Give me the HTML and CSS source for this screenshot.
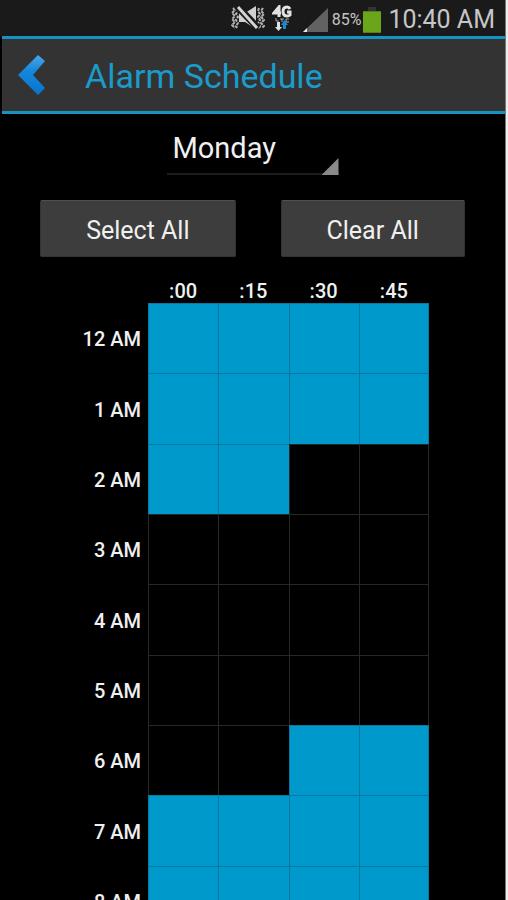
FILE: index.html
```html
<!DOCTYPE html>
<html lang="en">
<head>
<meta charset="utf-8">
<meta name="viewport" content="width=device-width, initial-scale=1">
<title>Alarm Schedule</title>
<link rel="stylesheet" href="styles.css">
</head>
<body>
<div class="app">
  <div class="status">
    <svg class="icon-mute" width="34" height="26" viewBox="0 0 34 26" aria-hidden="true">
      <g fill="none" stroke="#b4b4b4" stroke-width="2">
        <path d="M2 3l2 2-3 3 3 3-3 3 3 3-3 3 3 3" stroke-dasharray="3 1"/>
        <path d="M6 4l1 2-2 3 2 3-2 3 2 3-2 3 1 2" stroke-dasharray="3 1"/>
        <path d="M28 3l-1 3 2 3-2 3 2 3-2 3 2 3-1 3" stroke-dasharray="3 1"/>
        <path d="M32 3l-2 3 3 3-3 3 3 3-3 3 3 3-2 2" stroke-dasharray="3 1"/>
      </g>
      <path d="M8 8h6l11-7v23l-11-7H8z" fill="#d0d0d0"/>
      <path d="M6 1l21 22" stroke="#1b1a1b" stroke-width="7"/>
      <path d="M7 2l19 21" stroke="#d4d4d4" stroke-width="3"/>
    </svg>
    <svg class="icon-data" width="20" height="26" viewBox="0 0 20 26" aria-hidden="true">
      <g fill="none" stroke="#e2e2e2" stroke-width="2">
        <path d="M7 12V2L2 8h7M18 4q-1-2-3-2-4 0-4 4.500t4 4.500q2 0 3-1V7h-3" stroke-width="3"/>
        <path d="M4 13v3h3M8 14h4M10 14v3M17 14h-3v3h3" stroke="#a8a8a8" stroke-width="1"/>
      </g>
      <path d="M5 17h3v5h2l-3.500 4L3 22h2z" fill="#e2e2e2"/>
      <path d="M11 24v-4H9l3.500-5 3.500 5h-2v4z" fill="#168bd0"/>
    </svg>
    <svg class="icon-signal" width="25" height="24" viewBox="0 0 25 24" aria-hidden="true">
      <path d="M25 0v24H0z" fill="#626262"/>
      <path d="M4 20v4H0z" fill="#e8e8e8"/>
    </svg>
    <span class="percent">85%</span>
    <svg class="icon-battery" width="18" height="26" viewBox="0 0 18 26" aria-hidden="true">
      <path d="M5 0h8v4H5z" fill="#343434"/>
      <path d="M0 4h18v22H0z" fill="#6aa51b"/>
      <path d="M0 4h18v1H0zM0 25h18v1H0z" fill="#528415"/>
    </svg>
    <time class="clock">10:40 AM</time>
  </div>
  <header class="bar">
    <button class="back" type="button" aria-label="Back">
      <svg width="28" height="42" viewBox="0 0 28 42" aria-hidden="true">
        <defs>
          <linearGradient id="chevron" x1="0" y1="0" x2="0" y2="1">
            <stop offset="0" stop-color="#4aa6e6"/>
            <stop offset=".4" stop-color="#1487dc"/>
            <stop offset="1" stop-color="#0874cb"/>
          </linearGradient>
        </defs>
        <path d="M20 1l7 6-12 14 12 13-7 7L0 21z" fill="url(#chevron)"/>
      </svg>
    </button>
    <h1 class="title">Alarm Schedule</h1>
  </header>
  <main class="content">
    <div class="day">
      <select class="day-select" aria-label="Day">
        <option>Sunday</option>
        <option selected>Monday</option>
        <option>Tuesday</option>
        <option>Wednesday</option>
        <option>Thursday</option>
        <option>Friday</option>
        <option>Saturday</option>
      </select>
    </div>
    <div class="actions">
      <button class="action" type="button">Select All</button>
      <button class="action" type="button">Clear All</button>
    </div>
    <table class="schedule">
      <colgroup><col class="hours"><col span="4"></colgroup>
      <thead>
        <tr><td></td><th scope="col">:00</th><th scope="col">:15</th><th scope="col">:30</th><th scope="col">:45</th></tr>
      </thead>
      <tbody>
        <tr><th scope="row">12 AM</th><td><input type="checkbox" aria-label="12:00 AM" checked></td><td><input type="checkbox" aria-label="12:15 AM" checked></td><td><input type="checkbox" aria-label="12:30 AM" checked></td><td><input type="checkbox" aria-label="12:45 AM" checked></td></tr>
        <tr><th scope="row">1 AM</th><td><input type="checkbox" aria-label="1:00 AM" checked></td><td><input type="checkbox" aria-label="1:15 AM" checked></td><td><input type="checkbox" aria-label="1:30 AM" checked></td><td><input type="checkbox" aria-label="1:45 AM" checked></td></tr>
        <tr><th scope="row">2 AM</th><td><input type="checkbox" aria-label="2:00 AM" checked></td><td><input type="checkbox" aria-label="2:15 AM" checked></td><td><input type="checkbox" aria-label="2:30 AM"></td><td><input type="checkbox" aria-label="2:45 AM"></td></tr>
        <tr><th scope="row">3 AM</th><td><input type="checkbox" aria-label="3:00 AM"></td><td><input type="checkbox" aria-label="3:15 AM"></td><td><input type="checkbox" aria-label="3:30 AM"></td><td><input type="checkbox" aria-label="3:45 AM"></td></tr>
        <tr><th scope="row">4 AM</th><td><input type="checkbox" aria-label="4:00 AM"></td><td><input type="checkbox" aria-label="4:15 AM"></td><td><input type="checkbox" aria-label="4:30 AM"></td><td><input type="checkbox" aria-label="4:45 AM"></td></tr>
        <tr><th scope="row">5 AM</th><td><input type="checkbox" aria-label="5:00 AM"></td><td><input type="checkbox" aria-label="5:15 AM"></td><td><input type="checkbox" aria-label="5:30 AM"></td><td><input type="checkbox" aria-label="5:45 AM"></td></tr>
        <tr><th scope="row">6 AM</th><td><input type="checkbox" aria-label="6:00 AM"></td><td><input type="checkbox" aria-label="6:15 AM"></td><td><input type="checkbox" aria-label="6:30 AM" checked></td><td><input type="checkbox" aria-label="6:45 AM" checked></td></tr>
        <tr><th scope="row">7 AM</th><td><input type="checkbox" aria-label="7:00 AM" checked></td><td><input type="checkbox" aria-label="7:15 AM" checked></td><td><input type="checkbox" aria-label="7:30 AM" checked></td><td><input type="checkbox" aria-label="7:45 AM" checked></td></tr>
        <tr><th scope="row">8 AM</th><td><input type="checkbox" aria-label="8:00 AM" checked></td><td><input type="checkbox" aria-label="8:15 AM" checked></td><td><input type="checkbox" aria-label="8:30 AM" checked></td><td><input type="checkbox" aria-label="8:45 AM" checked></td></tr>
      </tbody>
    </table>
  </main>
</div>
</body>
</html>
```
FILE: styles.css
```css
* {
  box-sizing: border-box;
}

body {
  margin: 0;
  background: #ededed;
  color: #f0f0f0;
  font-family: Roboto, "Liberation Sans", sans-serif;
}

.app {
  display: flex;
  flex-direction: column;
  height: 100vh;
  margin-right: 2px;
  border-right: 1px solid #777;
  background: #000;
}

.status {
  display: flex;
  flex: none;
  align-items: center;
  justify-content: flex-end;
  height: 36px;
  padding: 3px 10px 0 0;
  background: #1b1a1b;
}

.icon-data {
  margin: 0 11px 0 7px;
}

.icon-mute,
.icon-data {
  margin-bottom: 4px;
}

.percent {
  margin: 0 2px 0 4px;
  color: #c4c4c4;
  font-size: 16px;
}

.clock {
  margin-left: 7px;
  color: #c6c6c6;
  font-size: 25px;
  line-height: 32px;
}

.bar {
  display: flex;
  flex: none;
  align-items: center;
  height: 78px;
  margin-left: 2px;
  border-top: 3px solid #1593c2;
  border-bottom: 3px solid #1593c2;
  background: #333;
}

.back {
  display: flex;
  padding: 0 16px;
  border: 0;
  background: none;
}

.title {
  margin: 0 0 0 23px;
  padding-top: 2px;
  color: #1b9bca;
  font-size: 34px;
  font-weight: 400;
  line-height: 40px;
}

.content {
  flex: 1;
  min-height: 0;
  overflow-y: auto;
  scrollbar-width: none;
}

.day {
  position: relative;
  width: 172px;
  margin: 12px auto 0;
}

.day::after {
  content: "";
  position: absolute;
  right: 0;
  bottom: 0;
  width: 17px;
  height: 17px;
  background: #898989;
  clip-path: polygon(100% 0, 100% 100%, 0 100%);
  pointer-events: none;
}

.day-select {
  display: block;
  width: 100%;
  height: 49px;
  padding: 0 0 4px 6px;
  border: 0;
  border-bottom: 2px solid #1c1c1c;
  border-radius: 0;
  appearance: none;
  background: #000;
  color: #f0f0f0;
  font: 29px Roboto, "Liberation Sans", sans-serif;
}

.actions {
  display: flex;
  justify-content: center;
  gap: 45px;
  margin-top: 25px;
}

.action {
  height: 57px;
  padding: 3px 45px 0;
  border: 1px solid #333;
  border-top-color: #505050;
  border-radius: 2px;
  background: #3d3d3d;
  color: #f0f0f0;
  font: 25px Roboto, "Liberation Sans", sans-serif;
}

.schedule {
  width: 353px;
  margin: 20px auto 0;
  border-spacing: 0;
  table-layout: fixed;
}

.hours {
  width: 72px;
}

.schedule th,
.schedule td {
  padding: 0;
}

.schedule th {
  padding-top: 2px;
  font-size: 20px;
  font-weight: 500;
}

.schedule thead th {
  height: 26px;
}

.schedule tbody th {
  padding-right: 7px;
  text-align: right;
  white-space: nowrap;
}

.schedule tbody td {
  height: 70px;
}

.schedule tr:nth-child(3n + 2) td {
  height: 71px;
}

.schedule input {
  display: block;
  width: 100%;
  height: 100%;
  margin: 0;
  border: 1px solid #282828;
  border-width: 1px 0 0 1px;
  appearance: none;
  background: #000;
}

.schedule input:checked {
  border-color: #0b76a0;
  background: #0099cc;
}

.schedule td:last-child input {
  border-right-width: 1px;
}
```
